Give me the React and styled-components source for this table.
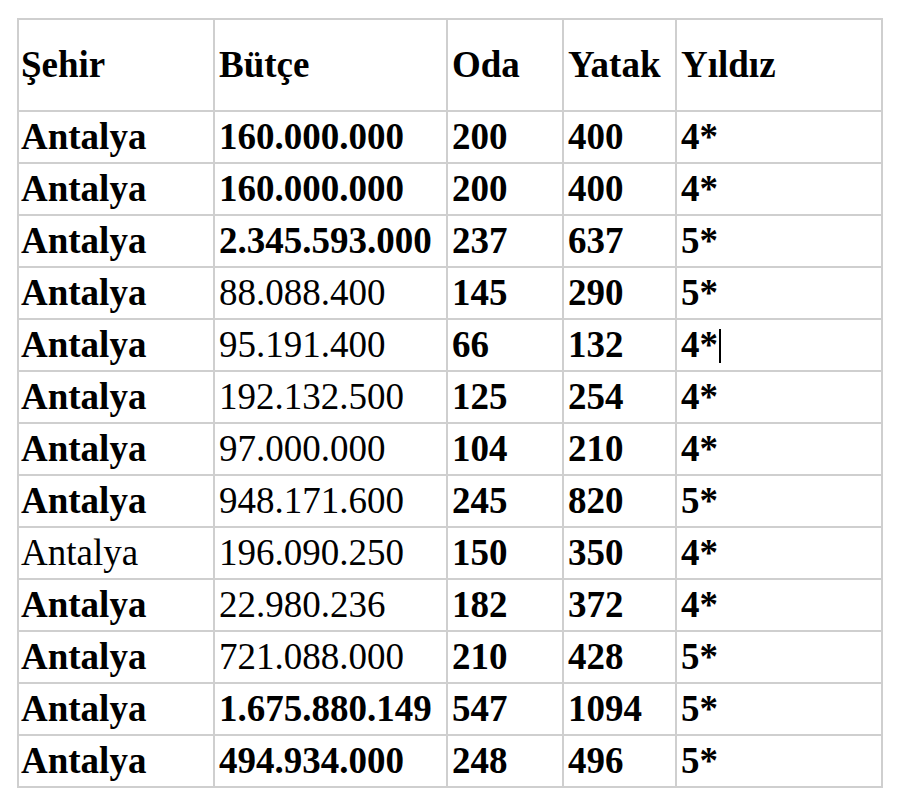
import styled, { createGlobalStyle } from 'styled-components';

const GlobalStyle = createGlobalStyle`
  html, body {
    margin: 0;
    padding: 0;
    background: #ffffff;
  }
`;

const Page = styled.div`
  padding: 18px 0 0 17px;
  font-family: "Liberation Serif", "Times New Roman", serif;
  color: #000;
`;

const Table = styled.table`
  border-collapse: collapse;
  table-layout: fixed;
  width: 864px;
  border: 2px solid #cfcfcf;
`;

const HeadRow = styled.tr`
  height: 92px;
`;

const Row = styled.tr`
  height: 52px;
`;

const Cell = styled.td`
  border: 2px solid #cfcfcf;
  padding: 0 4px;
  font-size: 37px;
  line-height: 1.1;
  font-weight: ${(p) => (p.$bold ? 700 : 400)};
  white-space: nowrap;
  vertical-align: middle;
  text-align: left;

  &:first-child {
    padding-left: 2px;
  }
`;

const HeadCell = styled(Cell).attrs({ as: 'th' })``;

const Caret = styled.span`
  display: inline-block;
  width: 2px;
  height: 34px;
  margin-left: 1px;
  background: #000;
  vertical-align: -6px;
`;

const widths = [196, 233, 116, 113, 206];
const headers = ['Şehir', 'Bütçe', 'Oda', 'Yatak', 'Yıldız'];

// [şehir, bütçe, oda, yatak, yıldız, şehir bold, bütçe bold, caret]
const rows = [
  ['Antalya', '160.000.000', '200', '400', '4*', true, true],
  ['Antalya', '160.000.000', '200', '400', '4*', true, true],
  ['Antalya', '2.345.593.000', '237', '637', '5*', true, true],
  ['Antalya', '88.088.400', '145', '290', '5*', true, false],
  ['Antalya', '95.191.400', '66', '132', '4*', true, false, true],
  ['Antalya', '192.132.500', '125', '254', '4*', true, false],
  ['Antalya', '97.000.000', '104', '210', '4*', true, false],
  ['Antalya', '948.171.600', '245', '820', '5*', true, false],
  ['Antalya', '196.090.250', '150', '350', '4*', false, false],
  ['Antalya', '22.980.236', '182', '372', '4*', true, false],
  ['Antalya', '721.088.000', '210', '428', '5*', true, false],
  ['Antalya', '1.675.880.149', '547', '1094', '5*', true, true],
  ['Antalya', '494.934.000', '248', '496', '5*', true, true],
];

export default function App() {
  return (
    <Page>
      <GlobalStyle />
      <Table>
        <colgroup>
          {widths.map((w, i) => (
            <col key={i} style={{ width: w }} />
          ))}
        </colgroup>
        <thead>
          <HeadRow>
            {headers.map((h) => (
              <HeadCell key={h} $bold>
                {h}
              </HeadCell>
            ))}
          </HeadRow>
        </thead>
        <tbody>
          {rows.map(([city, budget, rooms, beds, stars, cityBold, budgetBold, caret], i) => (
            <Row key={i}>
              <Cell $bold={cityBold}>{city}</Cell>
              <Cell $bold={budgetBold}>{budget}</Cell>
              <Cell $bold>{rooms}</Cell>
              <Cell $bold>{beds}</Cell>
              <Cell $bold>
                {stars}
                {caret && <Caret />}
              </Cell>
            </Row>
          ))}
        </tbody>
      </Table>
    </Page>
  );
}
